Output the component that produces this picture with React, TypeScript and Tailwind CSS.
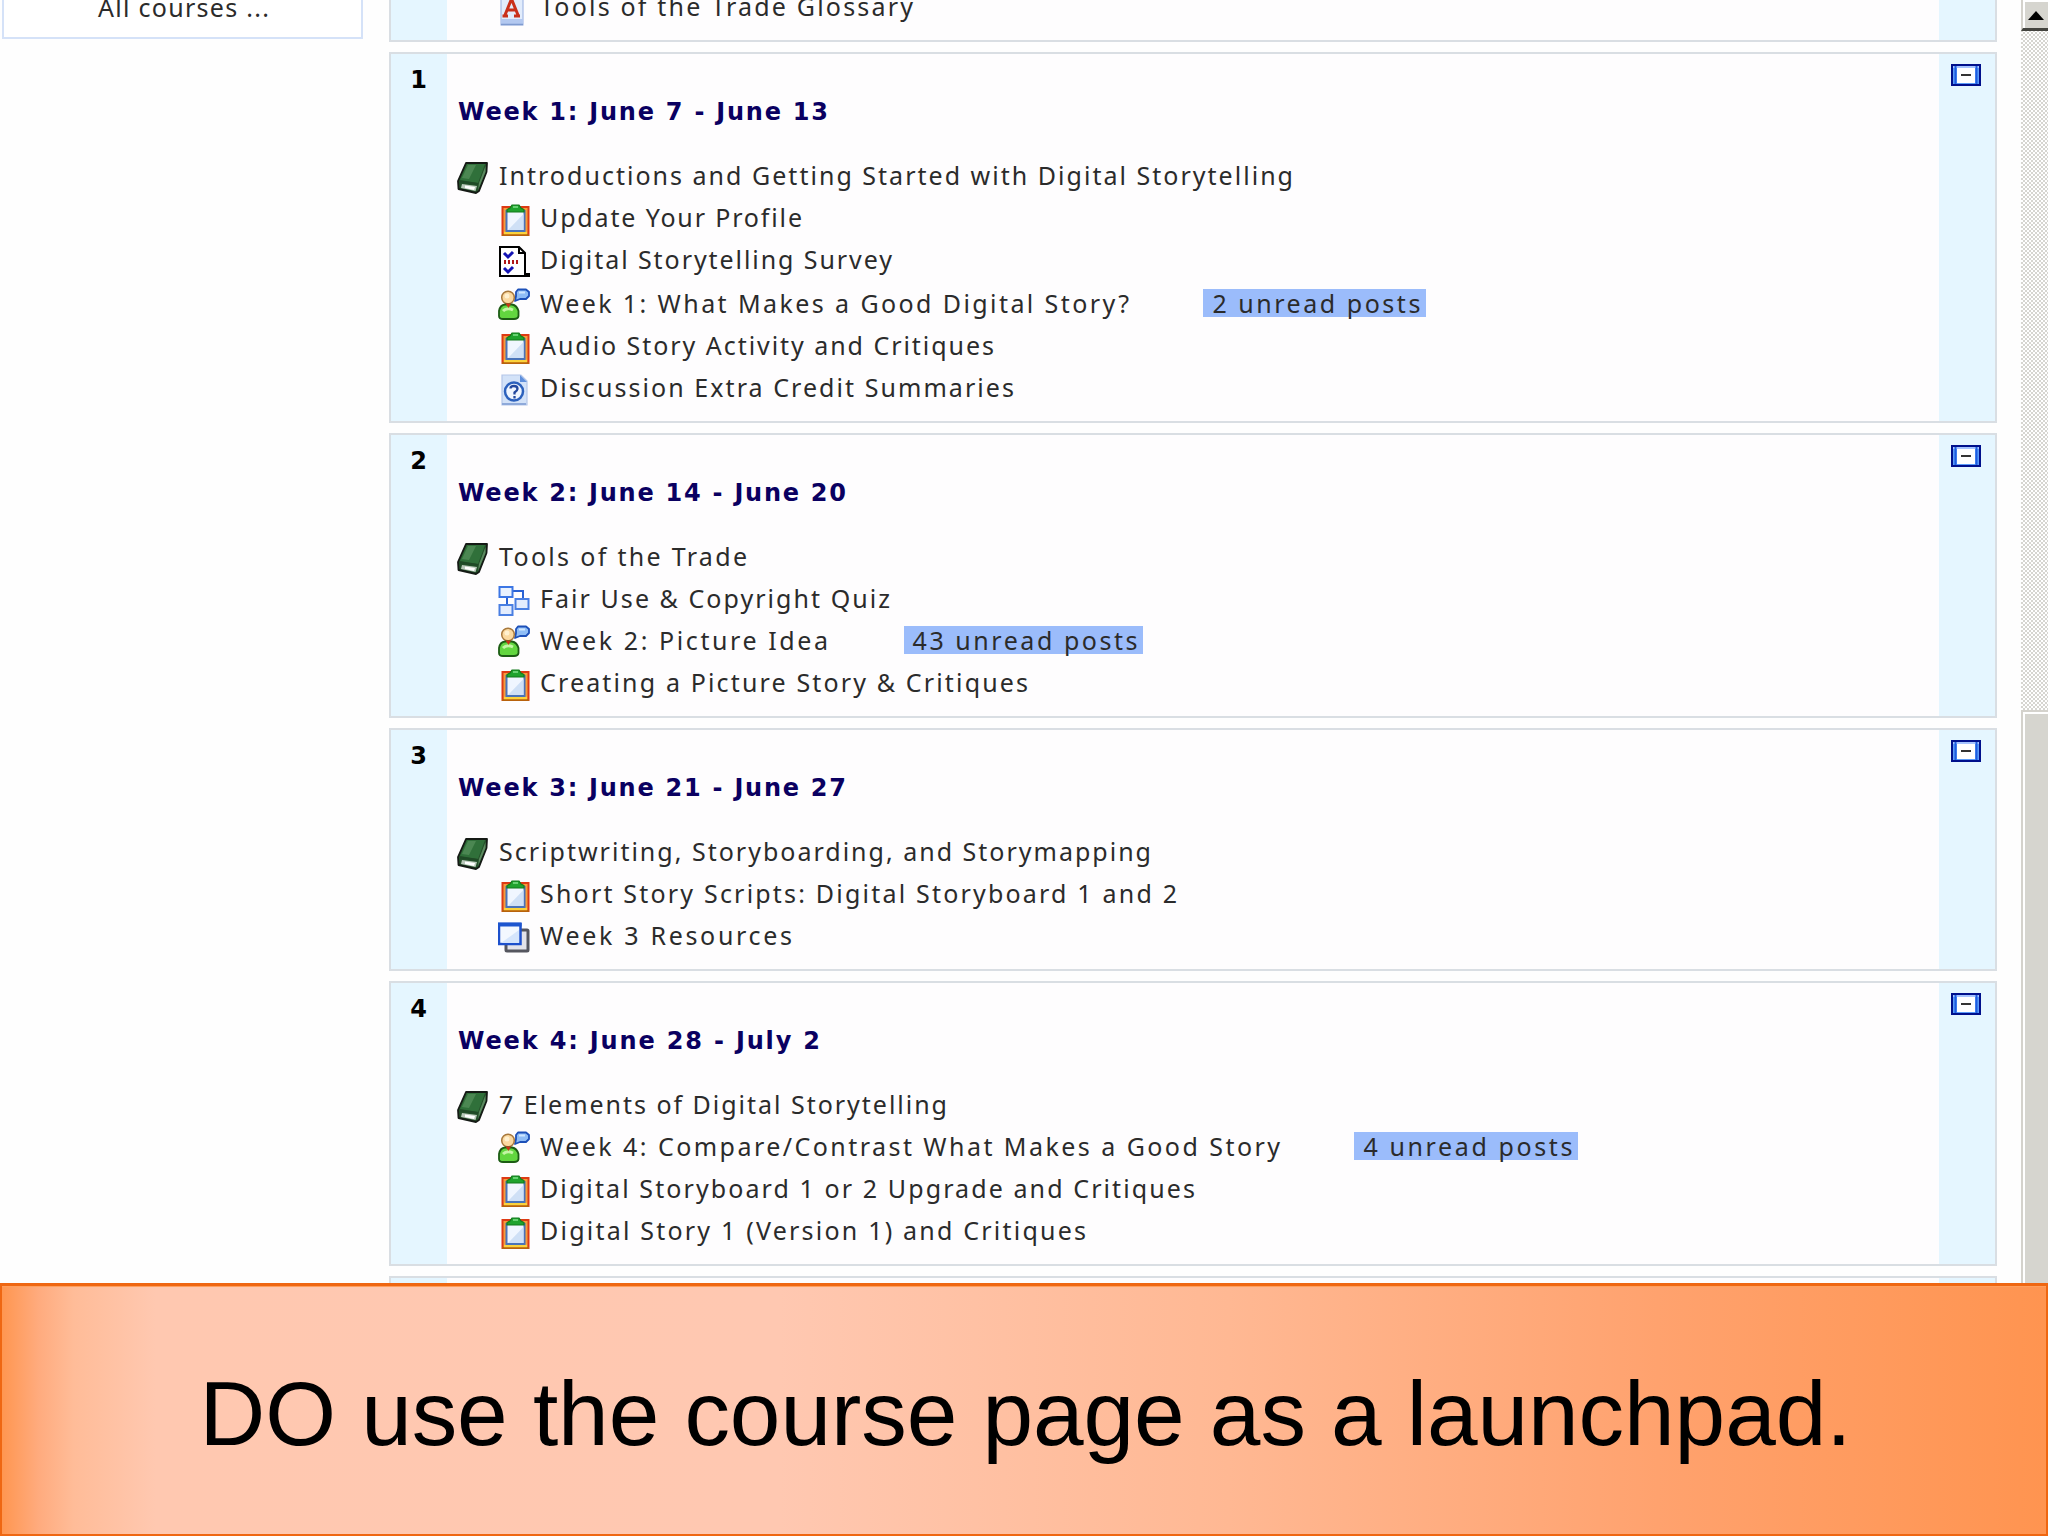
import React, { useLayoutEffect, useRef, useState } from 'react';

type IconName = 'book' | 'clipboard' | 'survey' | 'forum' | 'help' | 'quiz' | 'pages' | 'glossary';

interface Activity {
  icon: IconName;
  label: string;
  width: number;
  unread?: { text: string; gap: number; width: number };
  tall?: boolean;
}

interface Week {
  number: string;
  title: string;
  titleWidth: number;
  activities: Activity[];
}

const weeks: Week[] = [
  {
    number: '1',
    title: 'Week 1: June 7 - June 13',
    titleWidth: 370,
    activities: [
      { icon: 'book', label: 'Introductions and Getting Started with Digital Storytelling', width: 794 },
      { icon: 'clipboard', label: 'Update Your Profile', width: 262 },
      { icon: 'survey', label: 'Digital Storytelling Survey', width: 352 },
      { icon: 'forum', label: 'Week 1: What Makes a Good Digital Story?', width: 589, unread: { text: '2 unread posts', gap: 72, width: 208 }, tall: true },
      { icon: 'clipboard', label: 'Audio Story Activity and Critiques', width: 454 },
      { icon: 'help', label: 'Discussion Extra Credit Summaries', width: 474 },
    ],
  },
  {
    number: '2',
    title: 'Week 2: June 14 - June 20',
    titleWidth: 388,
    activities: [
      { icon: 'book', label: 'Tools of the Trade', width: 248 },
      { icon: 'quiz', label: 'Fair Use & Copyright Quiz', width: 350 },
      { icon: 'forum', label: 'Week 2: Picture Idea', width: 288, unread: { text: '43 unread posts', gap: 73, width: 225 } },
      { icon: 'clipboard', label: 'Creating a Picture Story & Critiques', width: 488 },
    ],
  },
  {
    number: '3',
    title: 'Week 3: June 21 - June 27',
    titleWidth: 388,
    activities: [
      { icon: 'book', label: 'Scriptwriting, Storyboarding, and Storymapping', width: 652 },
      { icon: 'clipboard', label: 'Short Story Scripts: Digital Storyboard 1 and 2', width: 637 },
      { icon: 'pages', label: 'Week 3 Resources', width: 252 },
    ],
  },
  {
    number: '4',
    title: 'Week 4: June 28 - July 2',
    titleWidth: 362,
    activities: [
      { icon: 'book', label: '7 Elements of Digital Storytelling', width: 448 },
      { icon: 'forum', label: 'Week 4: Compare/Contrast What Makes a Good Story', width: 740, unread: { text: '4 unread posts', gap: 72, width: 209 } },
      { icon: 'clipboard', label: 'Digital Storyboard 1 or 2 Upgrade and Critiques', width: 655 },
      { icon: 'clipboard', label: 'Digital Story 1 (Version 1) and Critiques', width: 546 },
    ],
  },
];

// Spreads the letters so that the label takes up the given width
const FitText: React.FC<{ text: string; width: number; className?: string }> = ({ text, width, className = '' }) => {
  const ref = useRef<HTMLSpanElement>(null);
  const [spacing, setSpacing] = useState(0);

  useLayoutEffect(() => {
    if (!ref.current) return;
    const natural = ref.current.getBoundingClientRect().width - spacing * text.length;
    setSpacing((width - natural) / (text.length - 1));
  }, [text, width]);

  return (
    <span ref={ref} className={`inline-block shrink-0 whitespace-nowrap ${className}`} style={{ letterSpacing: `${spacing}px` }}>
      {text}
    </span>
  );
};

const ActivityIcon: React.FC<{ name: IconName }> = ({ name }) => {
  const cls = 'block h-8 w-8 shrink-0';
  switch (name) {
    case 'book':
      return (
        <svg viewBox="0 0 32 32" className={cls}>
          <path d="M9 1H30L29.500 10L22 29L19 31L1.500 27L1 19Z" fill="#24502a" stroke="#151a15" strokeWidth="1.8" strokeLinejoin="round" />
          <path d="M10 2H28L21 21L3 18Z" fill="#30703a" />
          <path d="M11 3H19L12 17L5 16Z" fill="#5b9460" opacity=".65" />
          <path d="M28.500 4L22 21L21 28L28.500 10Z" fill="#5c8a60" />
          <path d="M5 22L20 24L18.500 29L4 26Z" fill="#b9c9ba" />
          <path d="M8 23.500L18 25L17 28L8 26Z" fill="#fff" />
          <path d="M3 19.500L21 22" stroke="#1f4a26" strokeWidth="2" />
        </svg>
      );
    case 'clipboard':
      return (
        <svg viewBox="0 0 32 32" className={cls}>
          <rect x="4.500" y="3" width="26" height="28" fill="#f59b3c" stroke="#de3a14" strokeWidth="2" />
          <path d="M4 31H31" stroke="#b8620c" strokeWidth="2" />
          <path d="M6 29H29" stroke="#fbd23c" strokeWidth="2.500" />
          <rect x="8.500" y="7" width="18" height="20" fill="#f0f6ff" stroke="#4a73b8" strokeWidth="2" />
          <path d="M10 26L25.500 10V26Z" fill="#cfe0f6" />
          <path d="M9 8V5.500L12 4L14 1H21L23 4L26 5.500V8Z" fill="#1fa32e" stroke="#127a1c" strokeWidth="1.2" />
          <path d="M15 3H20" stroke="#7fe08a" strokeWidth="1.500" />
        </svg>
      );
    case 'survey':
      return (
        <svg viewBox="0 0 32 32" className={cls}>
          <path d="M3 1H21L27 7V28H31V30H2V1Z" fill="#fff" stroke="#000" strokeWidth="2" />
          <path d="M21 1V7H27" fill="none" stroke="#000" strokeWidth="2" />
          <path d="M6 7L10 11L15 6M6 22L10 26L15 21" fill="none" stroke="#1414b4" strokeWidth="3" />
          <path d="M6 16H20" stroke="#b01818" strokeWidth="4" strokeDasharray="2 2" />
        </svg>
      );
    case 'forum':
      return (
        <svg viewBox="0 0 32 32" className={`${cls} -mt-[2px]`}>
          <path d="M20 1.500H28L31 4V8L28 11H22L17 13L18 8V4Z" fill="#8fbdf6" stroke="#1d50b8" strokeWidth="1.8" strokeLinejoin="round" />
          <path d="M21 4.500H27" stroke="#cfe6ff" strokeWidth="2" />
          <circle cx="10" cy="9.500" r="6.3" fill="#fbd9a0" stroke="#a8783c" strokeWidth="1.5" />
          <circle cx="9" cy="8" r="2.500" fill="#fff0cf" />
          <path d="M1 28V23Q2 17 7 16.500H14Q19 17.500 20.500 23V28Q20 31 16 31H5Q1 31 1 28Z" fill="#62d63f" stroke="#1c5c14" strokeWidth="1.8" />
          <path d="M5 23Q9 19 15 22" fill="none" stroke="#c3f5a4" strokeWidth="3" />
          <path d="M7.500 15.500H13L10.5 20Z" fill="#c83418" />
        </svg>
      );
    case 'help':
      return (
        <svg viewBox="0 0 32 32" className={cls}>
          <path d="M4 1H23L29 7V31H4Z" fill="#d3e2f8" stroke="#b4c6e8" strokeWidth="1.2" />
          <path d="M22 1V8H29Z" fill="#5f8fdc" />
          <path d="M4 30H28" stroke="#8ea9da" strokeWidth="2" />
          <circle cx="16" cy="17.500" r="9" fill="#f0f6ff" stroke="#2c61bd" strokeWidth="2.5" />
          <path d="M12.500 14.500Q12.500 12 16 12T19.500 15Q19.500 16.500 16.500 18.500V20.500M16.500 22V24.500" fill="none" stroke="#23489e" strokeWidth="2.3" />
        </svg>
      );
    case 'quiz':
      return (
        <svg viewBox="0 0 32 32" className={cls}>
          <path d="M15 6H25V13M9 12V20" fill="none" stroke="#2a62d4" strokeWidth="2" />
          <rect x="1.500" y="2" width="13" height="10" fill="#eaf2fe" stroke="#3c76e4" strokeWidth="2" />
          <rect x="17.500" y="14" width="13" height="10" fill="#e3ecfd" stroke="#4a7fe2" strokeWidth="2" />
          <rect x="1.500" y="20" width="13" height="10" fill="#e3ecfd" stroke="#4a7fe2" strokeWidth="2" />
        </svg>
      );
    case 'pages':
      return (
        <svg viewBox="0 0 32 32" className={cls}>
          <rect x="8" y="8" width="22" height="21" rx="1" fill="#e3e3ea" stroke="#55565f" strokeWidth="3" />
          <rect x="1" y="2" width="21.500" height="20" fill="#f3f8ff" stroke="#1d50cc" strokeWidth="2.5" />
          <path d="M3 21L21 8V21Z" fill="#d5e5fc" />
          <path d="M0 2.500H23.500" stroke="#1d55cf" strokeWidth="4" />
        </svg>
      );
    case 'glossary':
      return (
        <svg viewBox="0 0 32 32" className={cls}>
          <path d="M3 0H25V31H3Z" fill="#e2ecfc" stroke="#a5bae4" strokeWidth="1.2" />
          <path d="M3 25H25V31H3Z" fill="#b3c8f0" />
          <path d="M3 30.500H25" stroke="#7f9bd0" strokeWidth="1.500" />
          <path d="M7 21L13.500 5L20 21M9 16H18M4.500 22H10M16 22H22" fill="none" stroke="#c9301c" strokeWidth="3" />
        </svg>
      );
  }
};

const CollapseIcon = () => (
  <svg viewBox="0 0 30 22" className="block h-[22px] w-[30px]">
    <rect x="1" y="1" width="28" height="20" fill="#5b9bf8" stroke="#00108c" strokeWidth="2" />
    <path d="M2 3H28" stroke="#a6c4ff" strokeWidth="2" />
    <path d="M4.500 2V20M25.500 2V20" stroke="#1c5ce0" strokeWidth="2" />
    <rect x="6" y="4" width="18" height="15" fill="#fff" />
    <path d="M10 11H20" stroke="#333" strokeWidth="2" />
  </svg>
);

const ActivityRow: React.FC<{ activity: Activity; first: boolean }> = ({ activity, first }) => {
  const { icon, label, width, unread, tall } = activity;
  return (
    <li className={`flex h-[42px] items-start ${tall ? 'pt-[2px] mb-[2px]' : ''} ${first ? '' : 'pl-[41px]'}`}>
      <ActivityIcon name={icon} />
      <FitText text={label} width={width} className="ml-[10px] -mt-[3px] leading-8" />
      {unread && (
        <span
          className="-mt-[1px] flex h-[28px] items-center bg-[#9bbcfb] pr-[3px] pl-[9px]"
          style={{ marginLeft: unread.gap }}
        >
          <FitText text={unread.text} width={unread.width} className="-mt-[1px] leading-7" />
        </span>
      )}
    </li>
  );
};

const WeekSection: React.FC<{ week: Week }> = ({ week }) => (
  <section className="flex border-2 border-[#d9dee3] bg-[#fefdfe]">
    <div className="w-[56px] shrink-0 bg-[#e5f6ff] pt-[10px] pr-[1px] text-center font-['DejaVu_Sans'] text-[24px] leading-8 font-bold text-black">
      {week.number}
    </div>
    <div className="grow pl-[10px]">
      <h2 className="mt-[42px] h-[32px] pl-[1px] font-['DejaVu_Sans'] text-[24px] leading-8 font-bold text-[#0a0061]">
        <FitText text={week.title} width={week.titleWidth} />
      </h2>
      <ul className="mt-[34px] pb-[5px]">
        {week.activities.map((a, i) => (
          <ActivityRow key={a.label} activity={a} first={i === 0} />
        ))}
      </ul>
    </div>
    <div className="w-[56px] shrink-0 bg-[#e5f6ff] pt-[10px] pl-[12px]">
      <CollapseIcon />
    </div>
  </section>
);

const Scrollbar = () => (
  <div className="flex h-full w-[27px] shrink-0 flex-col bg-[#fff] bg-[conic-gradient(#d6d5d0_25%,#fff_0_50%,#d6d5d0_0_75%,#fff_0)] bg-[length:4px_4px]">
    <div className="flex h-[31px] items-center justify-center border-b-[3px] border-l-2 border-b-[#44443f] border-l-[#d4d2cc] bg-[#d6d5cf] shadow-[inset_2px_2px_0_#fff]">
      <svg viewBox="0 0 16 9" className="mt-[2px] h-[9px] w-[16px]">
        <path d="M8 0L16 9H0Z" fill="#000" />
      </svg>
    </div>
    <div className="mt-[679px] grow border-t-2 border-l-2 border-[#d4d2cc] bg-[#d6d5cf] shadow-[inset_2px_2px_0_#fff]" />
  </div>
);

export default function App() {
  return (
    <div className="flex h-[1536px] w-[2048px] flex-col overflow-hidden bg-[#fefefe] font-['Noto_Sans',sans-serif] text-[25px] text-[#2b2b2b]">
      <div className="flex h-[1283px] shrink-0 overflow-hidden">
        <aside className="w-[389px] shrink-0 pl-[2px]">
          <div className="flex h-[39px] w-[361px] items-start overflow-hidden border-2 border-t-0 border-[#d5e2f8] bg-white pl-[94px]">
            <FitText text="All courses ..." width={171} className="-mt-[9px] leading-8" />
          </div>
        </aside>
        <main className="flex w-[1608px] shrink-0 flex-col gap-[10px]">
          <section className="flex h-[42px] shrink-0 border-2 border-t-0 border-[#d9dee3] bg-[#fefdfe]">
            <div className="w-[56px] bg-[#e5f6ff]" />
            <div className="flex grow items-start overflow-hidden pl-[51px]">
              <div className="-mt-[6px] flex">
                <ActivityIcon name="glossary" />
                <FitText text="Tools of the Trade Glossary" width={373} className="ml-[10px] -mt-[4px] leading-8" />
              </div>
            </div>
            <div className="w-[56px] bg-[#e5f6ff]" />
          </section>
          {weeks.map((week) => (
            <WeekSection key={week.number} week={week} />
          ))}
          <section className="flex h-[40px] shrink-0 border-2 border-[#d9dee3] bg-[#fefdfe]">
            <div className="w-[56px] bg-[#e5f6ff]" />
            <div className="grow" />
            <div className="w-[56px] bg-[#e5f6ff]" />
          </section>
        </main>
        <div className="w-[24px] shrink-0" />
        <Scrollbar />
      </div>
      <footer className="flex grow items-start justify-center border-x-2 border-t-[3px] border-b-2 border-[#ef6712] bg-[linear-gradient(90deg,#ff9650_0%,#ffab7e_1.800%,#ffbc98_3.500%,#ffc8b0_7.500%,#ffc8b1_38%,#ffb893_60%,#ffa26e_81%,#ff9450_100%)] shadow-[inset_0_1px_0_#ff9f5c]">
        <FitText text="DO use the course page as a launchpad." width={1652} className="mt-[76px] ml-[3px] font-['Liberation_Sans',Arial,sans-serif] text-[91px] leading-[104px] text-black" />
      </footer>
    </div>
  );
}
